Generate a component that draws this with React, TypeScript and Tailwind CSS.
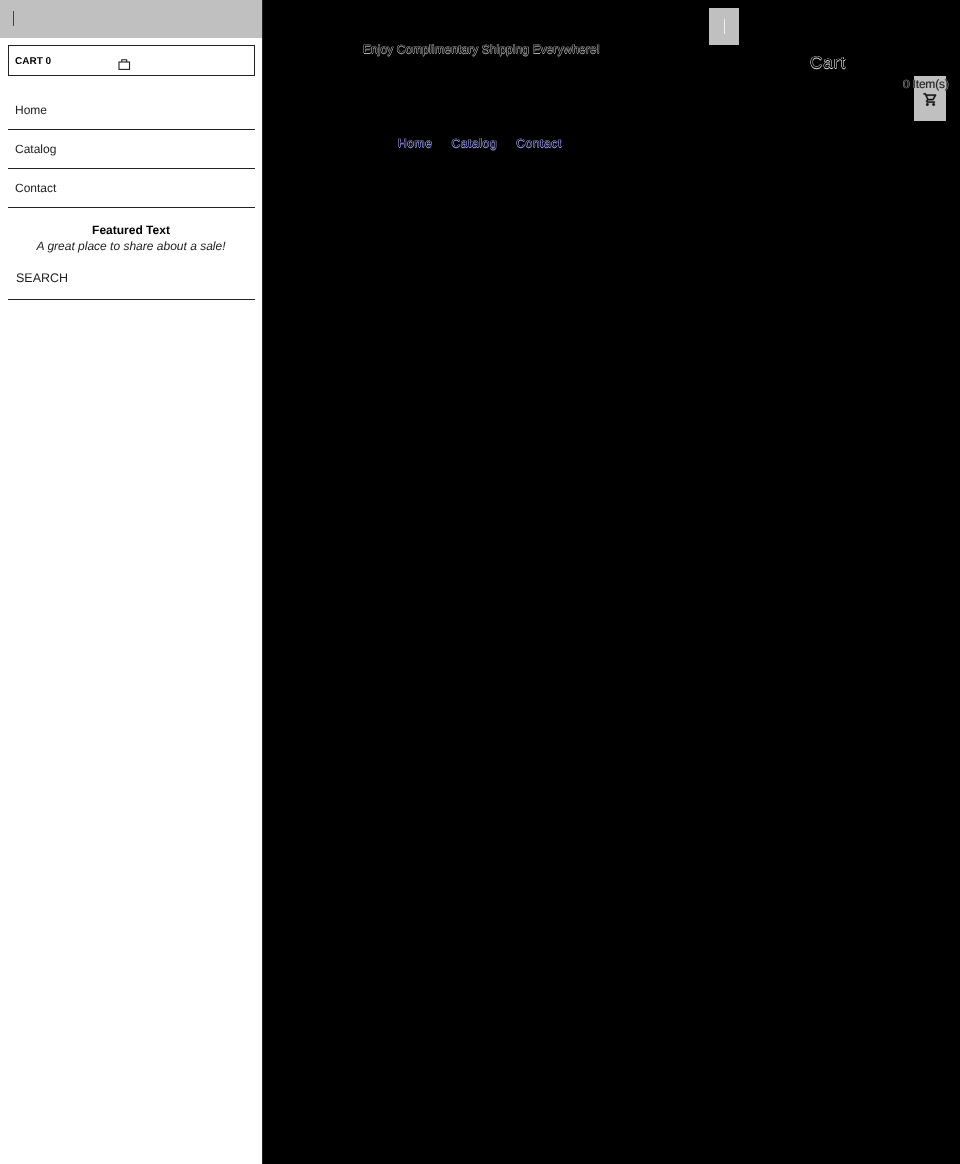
import React from "react";

function Bag() {
  return (
    <svg width="13" height="11" viewBox="0 0 13 11" fill="none" stroke="#222" strokeWidth="1.1" className="ml-[53px] mt-[3px]">
      <rect x="1" y="3" width="10.5" height="7.4" />
      <path d="M3.8 3V.8h4.9V3" />
    </svg>
  );
}

function CartIcon() {
  return (
    <svg width="15" height="15" viewBox="0 0 24 24" fill="#111" stroke="#111" strokeWidth="0.6">
      <path d="M15.55 13c.75 0 1.41-.41 1.75-1.03l3.58-6.49A.996.996 0 0 0 20.01 4H5.21l-.94-2H1v2h2l3.6 7.59-1.35 2.44C4.52 15.37 5.48 17 7 17h12v-2H7l1.1-2h7.45zM6.16 6h12.15l-2.76 5H8.53L6.16 6zM7 18c-1.1 0-1.99.9-1.99 2S5.9 22 7 22s2-.9 2-2-.9-2-2-2zm10 0c-1.1 0-1.99.9-1.99 2s.89 2 1.99 2 2-.9 2-2-.9-2-2-2z" />
    </svg>
  );
}

const navItems = ["Home", "Catalog", "Contact"];

export default function App() {
  return (
    <div className="flex min-h-[1164px] bg-black font-['Liberation_Sans',Arial,sans-serif] [text-rendering:geometricPrecision]">
      <aside className="w-[262px] shrink-0 bg-white text-[#111]">
        <div className="h-[38px] bg-[#c0c0c0] pl-[13px] pt-[11px]">
          <div className="h-[15px] w-px bg-[#444]" />
        </div>
        <div className="ml-[8px] mr-[7px] mt-[7px] flex h-[31px] items-start border border-[#222] pl-[6px] pt-[10px] text-[10px] font-bold leading-[12px] text-black">
          <span className="w-[50px] [will-change:transform]">CART 0</span>
          <Bag />
        </div>
        <nav className="ml-[8px] mr-[7px] mt-[15px]">
          {navItems.map((t) => (
            <div key={t} className="flex h-[39px] items-center border-b border-[#222] pl-[7px] text-[12px] text-[#222]">
              <span className="[will-change:transform]">{t}</span>
            </div>
          ))}
        </nav>
        <div className="mt-[14px] text-center text-[12px] font-bold leading-[16px] text-black [will-change:transform]">Featured Text</div>
        <div className="text-center text-[12px] italic leading-[16px] text-[#222] [will-change:transform]">A great place to share about a sale!</div>
        <div className="ml-[8px] mr-[7px] mt-[7px] flex h-[39px] items-center border-b border-[#222] pb-[4px] pl-[8px] text-[12.5px] text-[#222]">
          <span className="[will-change:transform]">SEARCH</span>
        </div>
      </aside>
      <main className="relative flex-1 border-l border-[#222] text-black">
        <div className="flex h-[121px] items-start">
          <p className="ml-[100px] mt-[42px] w-[238px] shrink-0 whitespace-nowrap text-[12px] leading-[14px] tracking-[0.07px] [will-change:transform] [text-shadow:-0.5px_0_0_#aaa,0.5px_0_0_#aaa,0_-0.5px_0_#aaa,0_0.5px_0_#aaa]">
            Enjoy Complimentary Shipping Everywhere!
          </p>
          <div className="ml-[108px] mt-[8px] flex h-[37px] w-[30px] shrink-0 items-center justify-center bg-[#c0c0c0]">
            <div className="h-[15px] w-px bg-[#f0f0f0]" />
          </div>
          <h2 className="ml-[71px] mt-[54px] w-[36px] shrink-0 whitespace-nowrap text-[17px] leading-[18px] tracking-[1px] [will-change:transform] [text-shadow:-0.5px_0_0_#ddd,0.5px_0_0_#ddd,0_-0.5px_0_#ddd,0_0.5px_0_#ddd]">
            Cart
          </h2>
          <div className="relative ml-[68px] mt-[76px] flex h-[45px] w-[32px] shrink-0 justify-center bg-[#c0c0c0] pt-[16px]">
            <span className="absolute -left-[11px] top-[1px] whitespace-nowrap text-[12px] leading-[14px] tracking-[-0.2px] text-[#222] [will-change:transform] [text-shadow:-0.4px_0_0_#999,0.4px_0_0_#999]">0 Item(s)</span>
            <CartIcon />
          </div>
        </div>
        <nav className="ml-[135px] mt-[15px] flex gap-[19px] text-[12px] leading-[14px] tracking-[0.62px] [will-change:transform] [text-shadow:-0.5px_0_0_#a5a5ff,0.5px_0_0_#a5a5ff,0_-0.5px_0_#a5a5ff,0_0.5px_0_#a5a5ff]">
          <span>Home</span>
          <span>Catalog</span>
          <span>Contact</span>
        </nav>
      </main>
    </div>
  );
}
